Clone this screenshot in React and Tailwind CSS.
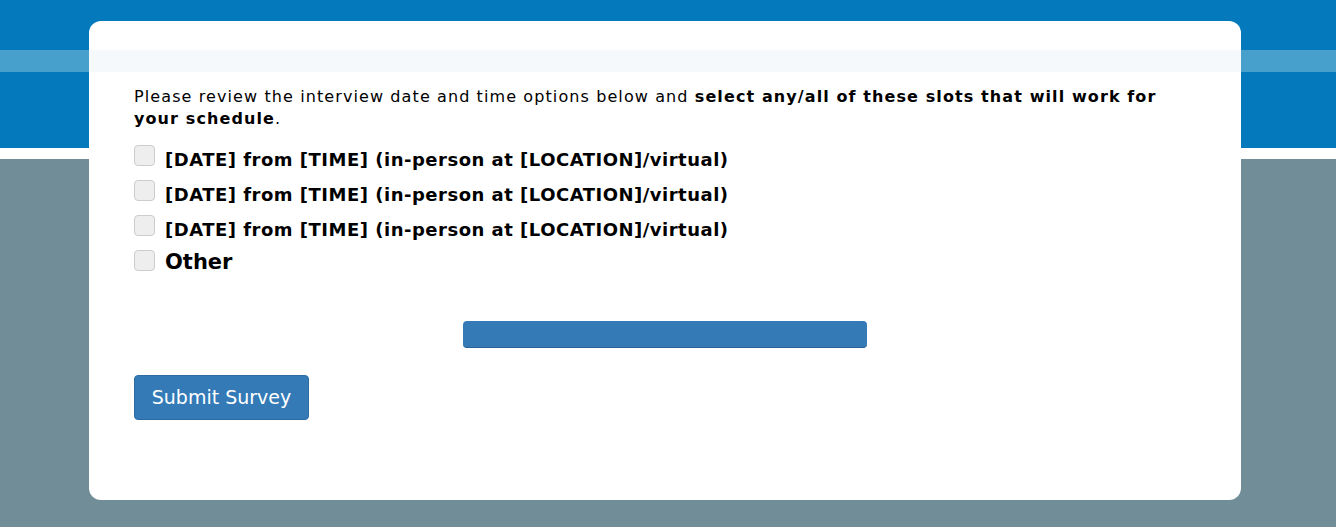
import { useState } from 'react'

const slots = [
  '[DATE] from [TIME] (in-person at [LOCATION]/virtual)',
  '[DATE] from [TIME] (in-person at [LOCATION]/virtual)',
  '[DATE] from [TIME] (in-person at [LOCATION]/virtual)',
]

function Box({ checked, onClick }) {
  return (
    <button
      type="button"
      onClick={onClick}
      aria-pressed={checked}
      className={`w-[21px] h-[21px] shrink-0 rounded-[4px] border border-[#cccccc] ${
        checked ? 'bg-[#337ab7]' : 'bg-[#eeeeee]'
      }`}
    />
  )
}

export default function App() {
  const [picked, setPicked] = useState([false, false, false, false])

  // toggle one of the slot checkboxes
  const toggle = (i) => {
    const next = [...picked]
    next[i] = !next[i]
    setPicked(next)
  }

  return (
    <div
      className="min-h-[527px] w-full pt-[21px] pb-[27px] pl-[89px] pr-[95px] bg-[linear-gradient(to_bottom,#0479bc_0px,#0479bc_50px,#479fcc_50px,#479fcc_72px,#0479bc_72px,#0479bc_148px,#ffffff_148px,#ffffff_159px,#718e98_159px)]"
      style={{ fontFamily: '"DejaVu Sans", Verdana, sans-serif' }}
    >
      <div className="bg-white rounded-[12px] h-[479px] pt-[29px] overflow-hidden">
        {/* header stripe */}
        <div className="h-[22px] bg-[#f5f9fc]" />

        <div className="px-[45px] pt-[14px]">
          <p className="text-[16px] leading-[22px] tracking-[1.1px] text-black">
            Please review the interview date and time options below and{' '}
            <strong className="font-bold">select any/all of these slots that will work for your schedule</strong>.
          </p>

          <div className="mt-[15px] flex flex-col gap-[5px]">
            {slots.map((s, i) => (
              <div key={i} className="flex items-start gap-[10px]">
                <Box checked={picked[i]} onClick={() => toggle(i)} />
                <span className="text-[18px] leading-[30px] tracking-[0.5px] font-bold text-black">{s}</span>
              </div>
            ))}
            <div className="flex items-start gap-[10px]">
              <Box checked={picked[3]} onClick={() => toggle(3)} />
              <span className="text-[21px] leading-[24px] font-bold text-black">Other</span>
            </div>
          </div>

          {/* progress bar */}
          <div className="flex justify-center mt-[47px] -mx-[45px]">
            <div className="w-[404px] h-[27px] rounded-[4px] bg-[#337ab7] border-b border-[#2a6496]" />
          </div>

          <button
            type="button"
            className="mt-[27px] w-[175px] h-[45px] rounded-[4px] bg-[#337ab7] border border-[#2e6da4] text-white text-[19px]"
          >
            Submit Survey
          </button>
        </div>
      </div>
    </div>
  )
}
